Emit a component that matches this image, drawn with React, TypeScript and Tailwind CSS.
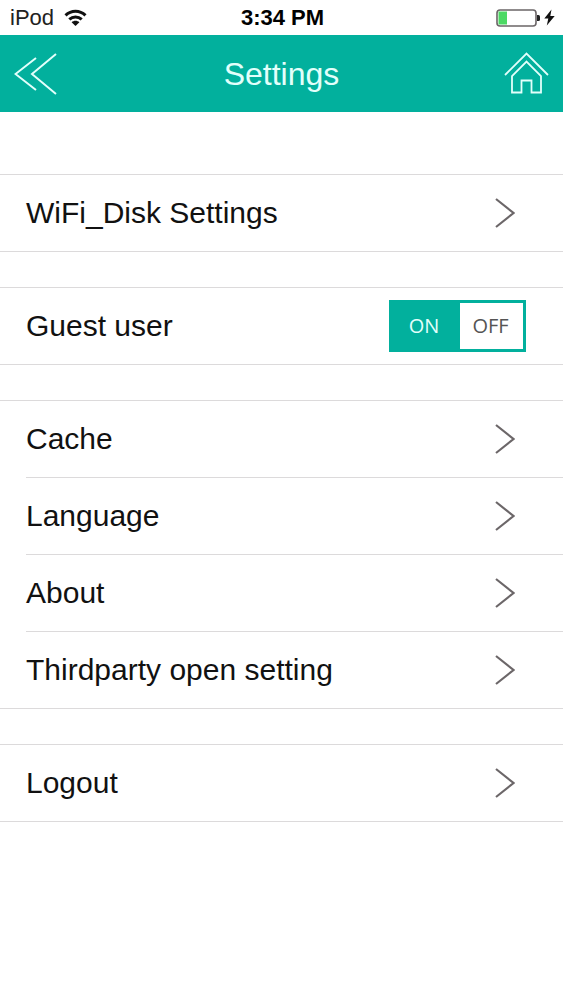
import * as React from "react";

const groups = [
    {id: 1, items: ['WiFi_Disk Settings']},
    {id: 2, items: ['Guest user']},
    {id: 3, items: ['Cache', 'Language', 'About', 'Thirdparty open setting']},
    {id: 4, items: ['Logout']},
]

function StatusBar() {
    return (
        <div className="grid h-[35px] grid-cols-3 items-center pr-2 pl-2.5 text-black">
            <div className="flex items-center gap-2.5">
                <span className="text-[22px] leading-6 text-[#222]">iPod</span>
                <svg width="23" height="18" viewBox="0 0 23 18" fill="none" stroke="#111" strokeWidth="3">
                    <path d="M1.5 6.3C7.3.8 15.7.8 21.5 6.3"/>
                    <path d="M5.3 10.4c3.6-3.3 8.8-3.3 12.4 0"/>
                    <path d="M11.5 17 7.6 13.2c2.2-2 5.600-2 7.800 0z" fill="#111" stroke="none"/>
                </svg>
            </div>
            <span className="text-center text-[22px] leading-6 font-bold whitespace-nowrap">3:34 PM</span>
            <div className="flex items-center justify-end gap-1">
                <svg width="44" height="18" viewBox="0 0 44 18">
                    <rect x="1" y="1" width="39" height="16" rx="3" fill="#fff" stroke="#6b6567" strokeWidth="1.6"/>
                    <rect x="2.5" y="2.5" width="8.5" height="13" fill="#4cd964"/>
                    <path d="M41 6h1.5a1.5 1.5 0 0 1 1.5 1.5v3a1.5 1.5 0 0 1-1.5 1.5H41z" fill="#222"/>
                </svg>
                <svg width="11" height="17" viewBox="0 0 11 17" fill="#111">
                    <path d="M7.5.5.3 9.500h4L2.800 16.500 10.700 7H6.300z"/>
                </svg>
            </div>
        </div>
    )
}

function Header() {
    return (
        <header className="grid h-[77px] grid-cols-[1fr_auto_1fr] items-center bg-[#02b09d] px-3.5 text-[#e2fffb]">
            <button type="button" aria-label="Back" className="justify-self-start">
                <svg width="43" height="42" viewBox="0 0 43 42" fill="none" stroke="currentColor" strokeWidth="2">
                    <path d="M22 5 1.500 21 22 37"/>
                    <path d="M42 1 18 21l24 20"/>
                </svg>
            </button>
            <h1 className="text-[32px] leading-10">Settings</h1>
            <button type="button" aria-label="Home" className="justify-self-end">
                <svg width="45" height="44" viewBox="0 0 45 44" fill="none" stroke="currentColor" strokeWidth="1.8">
                    <path d="M1 23 22.500 1.500 44 23"/>
                    <path d="M8 24v16.500h9.500V28.500h10v12H37V24L22.500 9.500z"/>
                </svg>
            </button>
        </header>
    )
}

function GuestSwitch() {
    const [on, setOn] = React.useState(true)
    const active = 'bg-[#02b09d] text-[#e2fffb]'
    const inactive = 'bg-white text-[#555]'

    return (
        <div role="group" aria-label="Guest user"
             className="flex h-[52px] w-[137px] border-[3px] border-[#02b09d] font-['Open_Sans',sans-serif] text-xl">
            <button type="button" aria-pressed={on} onClick={() => setOn(true)}
                    className={`w-[68px] pr-1 ${on ? active : inactive}`}>ON
            </button>
            <button type="button" aria-pressed={!on} onClick={() => setOn(false)}
                    className={`flex-1 pr-0.5 ${on ? inactive : active}`}>OFF
            </button>
        </div>
    )
}

function Chevron() {
    return (
        <svg width="20" height="30" viewBox="0 0 20 30" fill="none" stroke="#6c6769" strokeWidth="2.2">
            <path d="M1 1l17.500 14L1 29"/>
        </svg>
    )
}

export default function App() {
    return (
        <div className="min-h-screen bg-white font-['Liberation_Sans',Arial,sans-serif]">
            <StatusBar/>
            <Header/>
            <main className="flex flex-col gap-[35px] pt-[62px]">
                {groups.map(group => (
                    <ul key={group.id} className="border-y border-[#dcdadb] text-[30px] leading-9 text-[#111]">
                        {group.items.map((item, index) => (
                            <li key={item} className={index > 0 ? 'ml-[26px] border-t border-[#dcdadb]' : 'pl-[26px]'}>
                                {item === 'Guest user' ? (
                                    <div className="flex h-[76px] items-center justify-between pr-[37px]">
                                        <span>{item}</span>
                                        <GuestSwitch/>
                                    </div>
                                ) : (
                                    <a href="#" className="flex h-[76px] items-center justify-between pr-12">
                                        <span>{item}</span>
                                        <Chevron/>
                                    </a>
                                )}
                            </li>
                        ))}
                    </ul>
                ))}
            </main>
        </div>
    )
}
